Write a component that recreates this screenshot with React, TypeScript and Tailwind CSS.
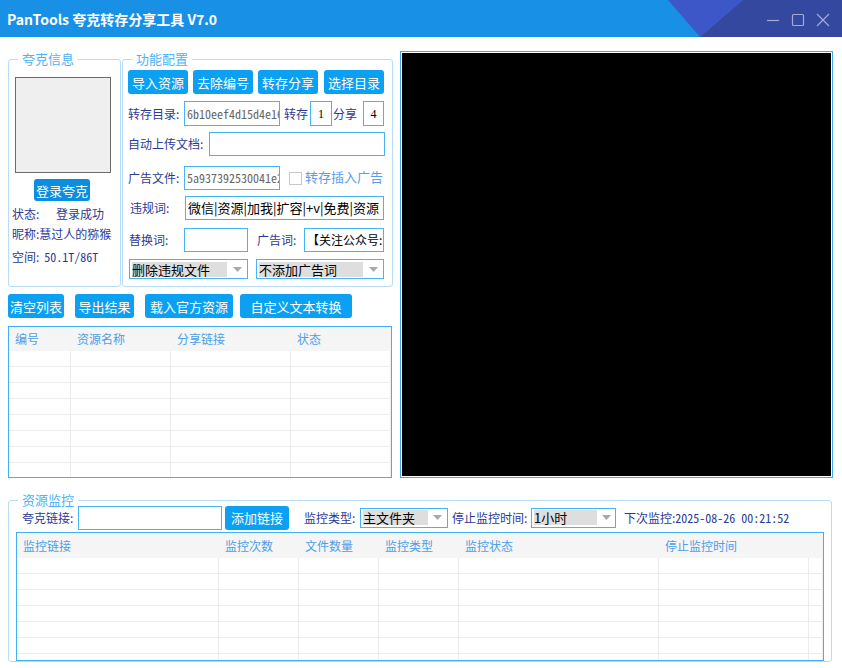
import type { ReactNode } from 'react';

const INK = 'text-[#2d3a94]';
const MONO = "font-['Noto_Sans_Mono_CJK_SC','Liberation_Mono',monospace]";

function Btn({ children, className = '' }: { children: ReactNode; className?: string }) {
  return (
    <div
      className={`flex shrink-0 items-center justify-center rounded-[3px] bg-[#0ca0f2] text-[13px] leading-none text-white ${className}`}
    >
      {children}
    </div>
  );
}

function Field({ children, className = '' }: { children?: ReactNode; className?: string }) {
  return (
    <div
      className={`flex shrink-0 items-center overflow-hidden whitespace-nowrap border border-[#48b4f4] bg-white px-[2px] ${className}`}
    >
      {children}
    </div>
  );
}

function Label({ children, className = '' }: { children: ReactNode; className?: string }) {
  return (
    <span className={`shrink-0 whitespace-nowrap text-[12px] leading-none ${INK} ${className}`}>{children}</span>
  );
}

function Select({ value, className = '', fill }: { value: string; className?: string; fill: string }) {
  return (
    <div className={`flex shrink-0 items-center border border-[#48b4f4] bg-white ${className}`}>
      <span className={`ml-[2px] flex h-[15px] items-center whitespace-nowrap bg-[#dedede] text-[13px] leading-none text-black ${fill}`}>
        {value}
      </span>
      <svg className="mx-auto" width="9" height="5" viewBox="0 0 9 5">
        <path d="M0 0h9L4.5 5z" fill="#a9a9a9" />
      </svg>
    </div>
  );
}

function Group({ title, className = '', children }: { title: string; className?: string; children: ReactNode }) {
  return (
    <div className={`relative shrink-0 rounded-[3px] border border-[#b8dcf5] ${className}`}>
      <span className="absolute -top-[9px] left-[9px] bg-white px-[4px] text-[13px] leading-[16px] text-[#4db2f7]">
        {title}
      </span>
      {children}
    </div>
  );
}

function Grid({
  cols,
  heads,
  rows,
  headH,
  className = '',
}: {
  cols: string[];
  heads: string[];
  rows: number;
  headH: string;
  className?: string;
}) {
  return (
    <div className={`shrink-0 overflow-hidden border border-[#42b0f4] bg-white ${className}`}>
      <div className={`flex items-center bg-[#f5f5f5] ${headH}`}>
        {cols.map((c, i) => (
          <div key={i} className={`shrink-0 pl-[6px] text-[12px] leading-none text-[#4d9fe8] ${c}`}>
            {heads[i] ?? ''}
          </div>
        ))}
      </div>
      {Array.from({ length: rows }).map((_, r) => (
        <div key={r} className="flex h-[16px] border-b border-[#ececec]">
          {cols.map((c, i) => (
            <div key={i} className={`shrink-0 border-r border-[#ececec] ${c}`} />
          ))}
        </div>
      ))}
    </div>
  );
}

function TitleBar() {
  return (
    <div className="relative flex h-[37px] items-center bg-[#1890e6]">
      <span className="pl-[7px] text-[14px] font-bold leading-none text-white">PanTools 夸克转存分享工具 V7.0</span>
      <svg className="absolute right-0 top-0" width="174" height="37" viewBox="0 0 174 37">
        <polygon points="0,0 75,0 32,37" fill="#3d56c8" />
        <polygon points="75,0 174,0 174,37 32,37" fill="#35489f" />
        <g stroke="#a3aad8" strokeWidth="1.2" fill="none">
          <path d="M99 20.5h12" />
          <rect x="124.5" y="14.5" width="11" height="11" rx="1" />
          <path d="M149 14l12 12M161 14l-12 12" />
        </g>
      </svg>
    </div>
  );
}

function AccountBox() {
  return (
    <Group title="夸克信息" className="h-[228px] w-[113px]">
      <div className="ml-[6px] mt-[17px] h-[96px] w-[96px] border border-[#6b6b6b] bg-[#efefef]" />
      <Btn className="ml-[25px] mt-[6px] h-[22px] w-[56px] !bg-[#0b8ee0]">登录夸克</Btn>
      <div className="ml-[3px] mt-[3px] flex h-[20px] items-center">
        <Label className="w-[44px]">状态:</Label>
        <Label>登录成功</Label>
      </div>
      <div className="ml-[3px] flex h-[20px] items-center">
        <Label>昵称:慧过人的猕猴</Label>
      </div>
      <div className="ml-[3px] mt-[3px] flex h-[20px] items-center">
        <Label>空间:</Label>
        <span className={`ml-[5px] ${MONO} text-[12px] leading-none ${INK}`}>50.1T/86T</span>
      </div>
    </Group>
  );
}

function ConfigBox() {
  const hash = `${MONO} text-[12px] text-[#666]`;
  return (
    <Group title="功能配置" className="h-[228px] w-[271px] pl-[5px]">
      <div className="mt-[10px] flex gap-[5px]">
        <Btn className="h-[24px] w-[60px]">导入资源</Btn>
        <Btn className="h-[24px] w-[60px]">去除编号</Btn>
        <Btn className="h-[24px] w-[60px]">转存分享</Btn>
        <Btn className="ml-[1px] h-[24px] w-[60px]">选择目录</Btn>
      </div>

      <div className="mt-[7px] flex h-[25px] items-center">
        <Label className="w-[56px]">转存目录:</Label>
        <Field className={`h-[25px] w-[96px] ${hash}`}>6b10eef4d15d4e16</Field>
        <Label className="ml-[4px] w-[24px]">转存</Label>
        <Field className="ml-[2px] h-[25px] w-[22px] justify-center font-['Liberation_Serif',serif] text-[12px] text-black">
          1
        </Field>
        <Label className="ml-[1px] w-[24px]">分享</Label>
        <Field className="ml-[6px] h-[25px] w-[21px] justify-center font-['Liberation_Serif',serif] text-[12px] text-black">
          4
        </Field>
      </div>

      <div className="mt-[6px] flex h-[24px] items-center">
        <Label className="w-[81px]">自动上传文档:</Label>
        <Field className="h-[24px] w-[176px]" />
      </div>

      <div className="mt-[10px] flex h-[24px] items-center">
        <Label className="w-[56px]">广告文件:</Label>
        <Field className={`h-[24px] w-[96px] border-[#7cc6f6] ${hash}`}>5a937392530041e2</Field>
        <div className="ml-[9px] h-[13px] w-[13px] shrink-0 border border-[#c8c8c8] bg-white" />
        <span className="ml-[3px] -mt-[3px] whitespace-nowrap text-[13px] leading-none text-[#5b9cf0]">转存插入广告</span>
      </div>

      <div className="mt-[6px] flex h-[24px] items-center">
        <Label className="ml-[2px] w-[55px]">违规词:</Label>
        <Field className="h-[24px] w-[199px] text-[13px] text-black">微信|资源|加我|扩容|+v|免费|资源</Field>
      </div>

      <div className="mt-[8px] flex h-[24px] items-center">
        <Label className="ml-[1px] w-[55px]">替换词:</Label>
        <Field className="h-[24px] w-[64px]" />
        <Label className="ml-[9px] w-[47px]">广告词:</Label>
        <Field className="h-[24px] w-[80px] px-[1px] text-[12px] text-black">【关注公众号:</Field>
      </div>

      <div className="mt-[7px] flex h-[20px] items-center">
        <Select value="删除违规文件" fill="w-[95px]" className="ml-[1px] h-[20px] w-[119px]" />
        <Select value="不添加广告词" fill="w-[104px]" className="ml-[8px] h-[20px] w-[128px]" />
      </div>
    </Group>
  );
}

function MonitorBox() {
  return (
    <Group title="资源监控" className="ml-[8px] mt-[22px] h-[162px] w-[824px]">
      <div className="ml-[13px] mt-[4px] flex h-[25px] items-center">
        <Label className="w-[56px]">夸克链接:</Label>
        <Field className="h-[24px] w-[144px]" />
        <Btn className="ml-[3px] h-[24px] w-[64px]">添加链接</Btn>
        <Label className="ml-[15px] w-[56px]">监控类型:</Label>
        <Select value="主文件夹" fill="w-[65px]" className="h-[20px] w-[88px]" />
        <Label className="ml-[4px] w-[79px]">停止监控时间:</Label>
        <Select value="1小时" fill="w-[63px]" className="h-[20px] w-[85px]" />
        <Label className="ml-[8px]">下次监控:</Label>
        <span className={`${MONO} text-[12px] leading-none ${INK}`}>2025-08-26 00:21:52</span>
      </div>
      <Grid
        className="ml-[7px] mt-[2px] h-[129px] w-[808px]"
        headH="h-[25px]"
        rows={7}
        cols={['w-[202px]', 'w-[80px]', 'w-[80px]', 'w-[80px]', 'w-[200px]', 'w-[150px]', 'flex-1']}
        heads={['监控链接', '监控次数', '文件数量', '监控类型', '监控状态', '停止监控时间']}
      />
    </Group>
  );
}

export default function App() {
  return (
    <div className="h-[668px] w-[842px] overflow-hidden bg-white font-['Noto_Sans_CJK_SC','Noto_Sans',sans-serif]">
      <TitleBar />
      <div className="flex items-start">
        <div className="flex w-[393px] shrink-0 flex-col pl-[8px] pt-[22px]">
          <div className="flex gap-[1px]">
            <AccountBox />
            <ConfigBox />
          </div>
          <div className="mt-[7px] flex h-[24px]">
            <Btn className="h-[24px] w-[56px]">清空列表</Btn>
            <Btn className="ml-[11px] h-[24px] w-[59px]">导出结果</Btn>
            <Btn className="ml-[11px] h-[24px] w-[88px]">载入官方资源</Btn>
            <Btn className="ml-[7px] h-[24px] w-[112px]">自定义文本转换</Btn>
          </div>
          <Grid
            className="mt-[8px] h-[152px] w-[384px]"
            headH="h-[24px]"
            rows={8}
            cols={['w-[62px]', 'w-[100px]', 'w-[120px]', 'flex-1']}
            heads={['编号', '资源名称', '分享链接', '状态']}
          />
        </div>
        <div className="ml-[7px] mt-[14px] h-[427px] w-[433px] shrink-0 border border-[#42a8ee] bg-white p-[1px]">
          <div className="h-full w-full bg-black" />
        </div>
      </div>
      <MonitorBox />
    </div>
  );
}
